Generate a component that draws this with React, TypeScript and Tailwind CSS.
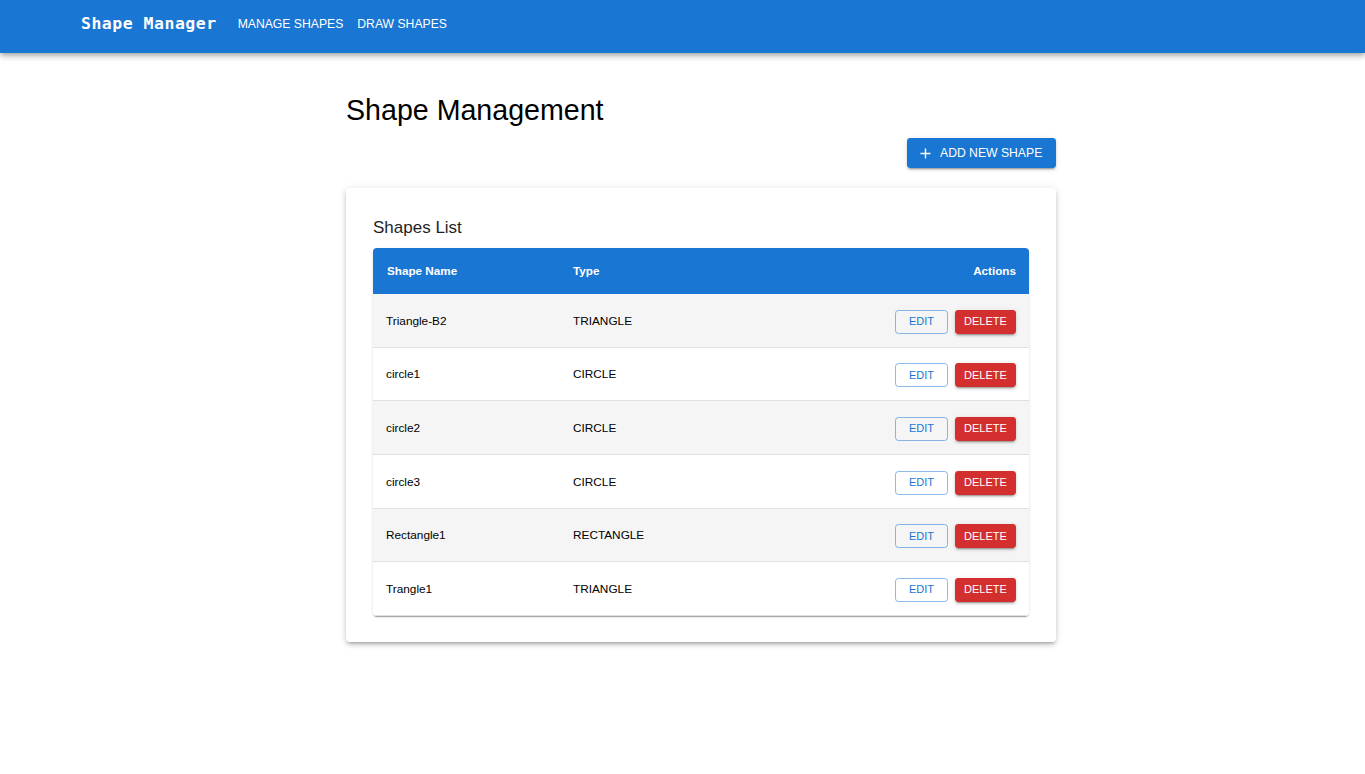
import React from "react";

const shapes = [
  { name: "Triangle-B2", type: "TRIANGLE", h: "h-[54px]" },
  { name: "circle1", type: "CIRCLE", h: "h-[53px]" },
  { name: "circle2", type: "CIRCLE", h: "h-[54px]" },
  { name: "circle3", type: "CIRCLE", h: "h-[54px]" },
  { name: "Rectangle1", type: "RECTANGLE", h: "h-[53px]" },
  { name: "Trangle1", type: "TRIANGLE", h: "h-[54px]" },
];

function Header() {
  return (
    <div className="h-[53px] bg-[#1976d2] flex items-center pl-[81px] shadow-[0_2px_4px_-1px_rgba(0,0,0,0.2),0_4px_5px_0_rgba(0,0,0,0.14),0_1px_10px_0_rgba(0,0,0,0.12)] relative z-10">
      <div className="font-['DejaVu_Sans_Mono',monospace] font-bold text-[16.5px] tracking-[0.5px] text-white mr-[14px] -mt-[4px]">
        Shape Manager
      </div>
      <div className="flex -mt-[5px] font-['Liberation_Sans',Arial,sans-serif] text-[12.2px] text-white">
        <span className="px-[7px]">MANAGE SHAPES</span>
        <span className="px-[7px]">DRAW SHAPES</span>
      </div>
    </div>
  );
}

function ShapeRow({ item, index }: any) {
  return (
    <div
      className={
        "flex items-center pt-[2px] border-b border-[#e0e0e0] text-[11.8px] text-black " +
        item.h +
        (index % 2 === 0 ? " bg-[#f5f5f5]" : " bg-white")
      }
    >
      <div className="w-[187px] pl-[13px]">{item.name}</div>
      <div className="flex-1 pl-[13px]">{item.type}</div>
      <div className="flex gap-[7px] pr-[13px]">
        <button className="w-[53px] h-[24px] border border-[rgba(25,118,210,0.5)] text-[#1976d2] text-[11px] rounded-[3.4px] flex items-center justify-center">
          EDIT
        </button>
        <button className="w-[61px] h-[24px] bg-[#d32f2f] text-white text-[11px] rounded-[3.4px] flex items-center justify-center shadow-[0_3px_1px_-2px_rgba(0,0,0,0.2),0_2px_2px_0_rgba(0,0,0,0.14),0_1px_5px_0_rgba(0,0,0,0.12)]">
          DELETE
        </button>
      </div>
    </div>
  );
}

export default function App() {
  return (
    <div className="min-h-screen bg-white font-['Liberation_Sans',Arial,sans-serif]">
      <Header />
      <div className="pl-[346px] pt-[40px]">
        <div className="w-[710px]">
          <h1 className="text-[28.6px] leading-[34px] text-black">Shape Management</h1>
          <div className="flex justify-end mt-[11px]">
            <button className="h-[30px] w-[149px] bg-[#1976d2] text-white rounded-[3.4px] flex items-center pl-[13px] shadow-[0_3px_1px_-2px_rgba(0,0,0,0.2),0_2px_2px_0_rgba(0,0,0,0.14),0_1px_5px_0_rgba(0,0,0,0.12)]">
              <svg width="11" height="11" viewBox="0 0 11 11" className="mr-[9px]">
                <path d="M5.5 0.5v10M0.5 5.5h10" stroke="white" strokeWidth="1.4" fill="none" />
              </svg>
              <span className="text-[12.2px]">ADD NEW SHAPE</span>
            </button>
          </div>
          <div className="mt-[20px] bg-white rounded-[4px] px-[27px] pt-[28px] pb-[26px] shadow-[0_3px_3px_-2px_rgba(0,0,0,0.2),0_3px_4px_0_rgba(0,0,0,0.14),0_1px_8px_0_rgba(0,0,0,0.12)]">
            <h2 className="text-[17px] leading-[24px] text-[#1f1f1f]">Shapes List</h2>
            <div className="mt-[8px] rounded-[4px] overflow-hidden shadow-[0_2px_1px_-1px_rgba(0,0,0,0.2),0_1px_1px_0_rgba(0,0,0,0.14),0_1px_3px_0_rgba(0,0,0,0.12)]">
              <div className="flex items-center h-[46px] bg-[#1976d2] text-white font-bold text-[11.7px]">
                <div className="w-[187px] pl-[14px]">Shape Name</div>
                <div className="flex-1 pl-[13px]">Type</div>
                <div className="pr-[13px]">Actions</div>
              </div>
              {shapes.map((s, i) => (
                <ShapeRow key={s.name} item={s} index={i} />
              ))}
            </div>
          </div>
        </div>
      </div>
    </div>
  );
}
